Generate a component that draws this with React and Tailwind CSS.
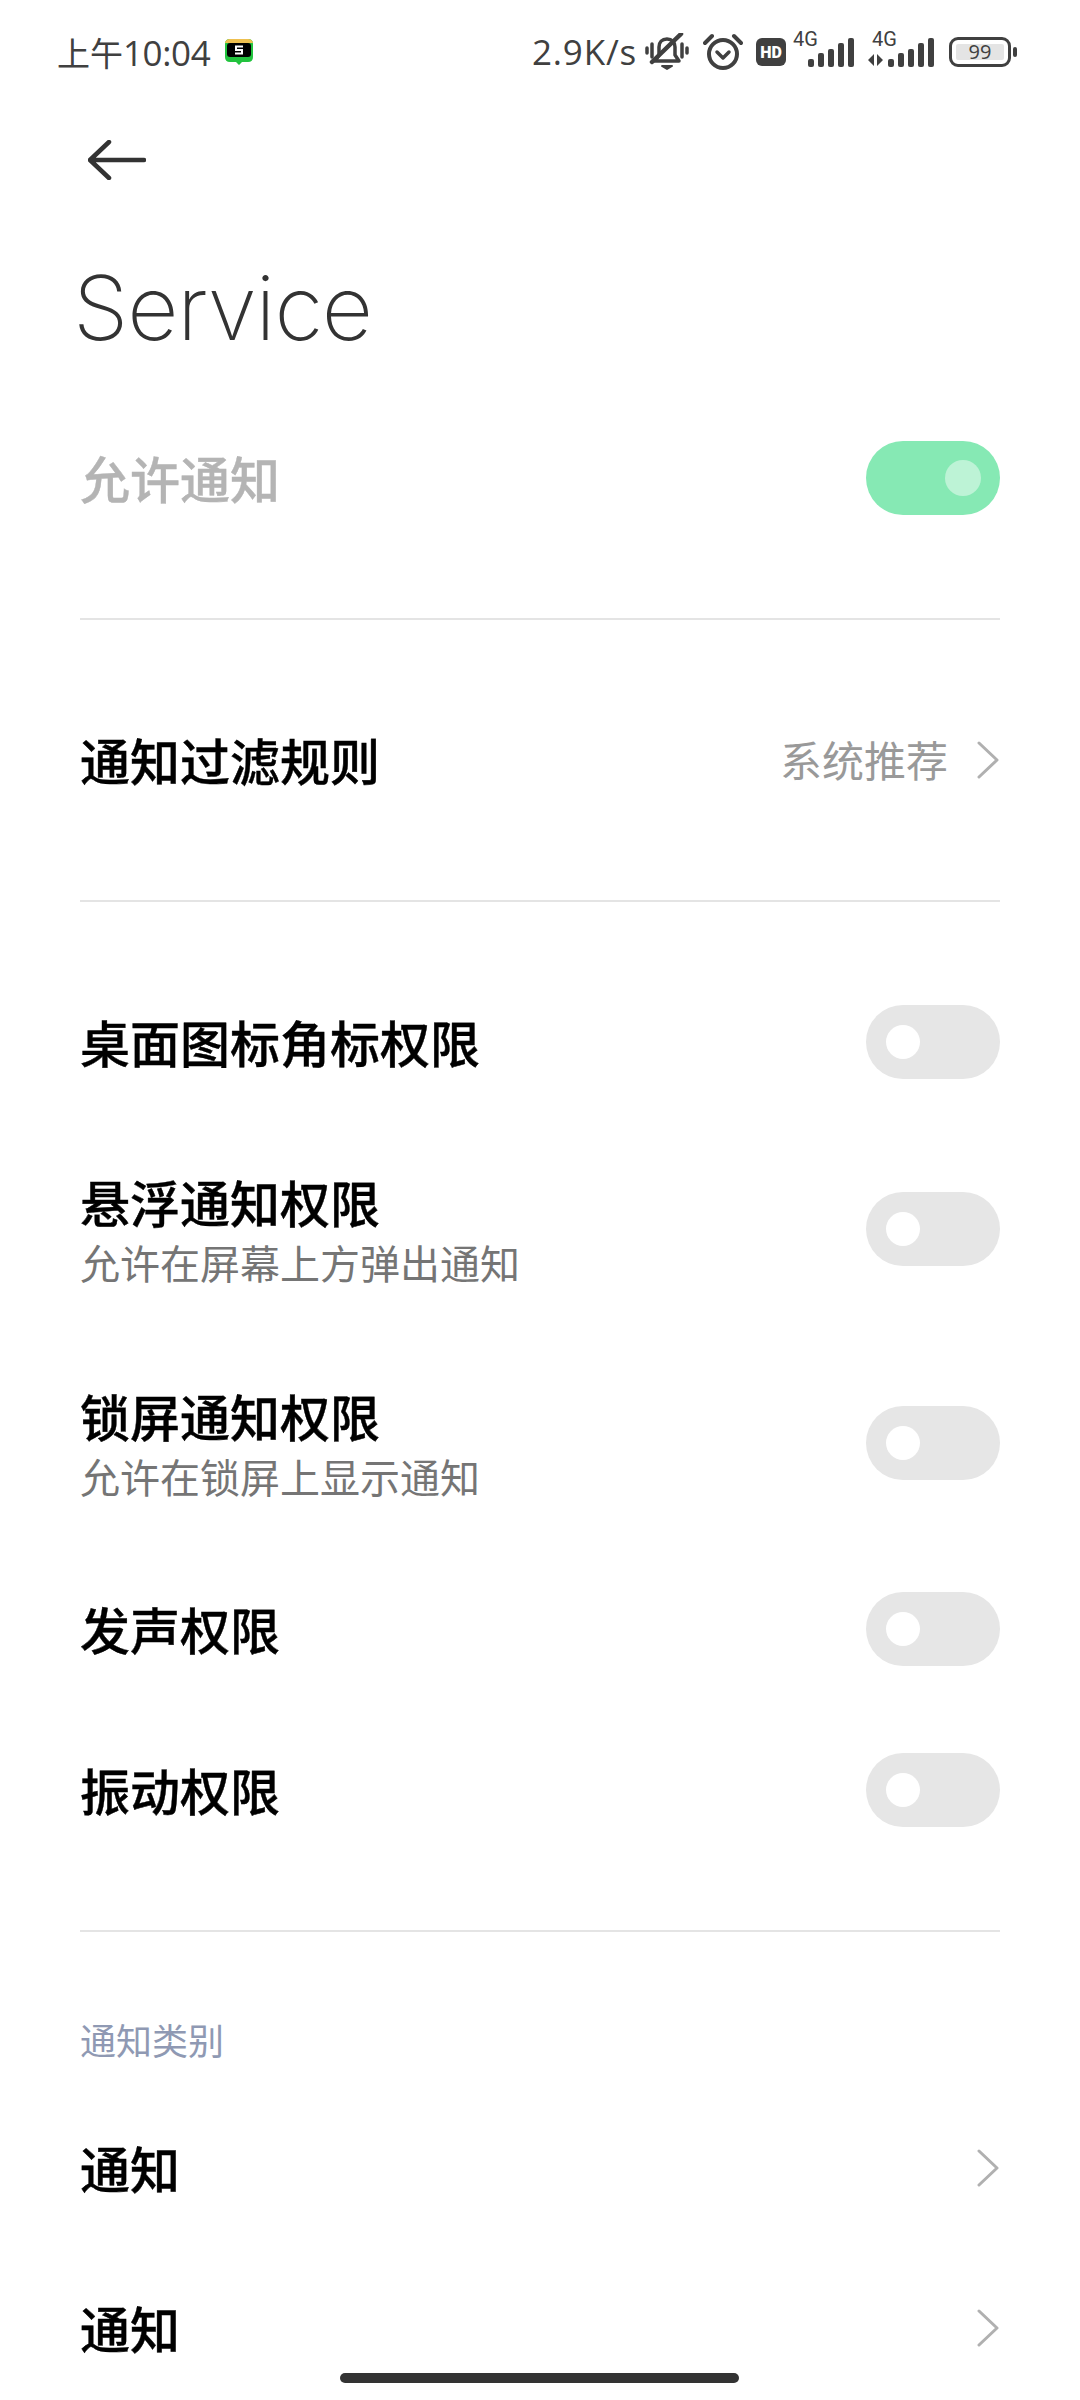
const cjk = 'font-["Noto_Sans_CJK_SC",sans-serif]';

const Toggle = ({ on }) => {
  if (on) {
    return (
      <div className="w-[134px] h-[74px] shrink-0 rounded-full bg-[#86e9b4] flex items-center justify-end pr-[19px]">
        <div className="w-[36px] h-[36px] rounded-full bg-[#bdf3d6]" />
      </div>
    );
  }
  return (
    <div className="w-[134px] h-[74px] shrink-0 rounded-full bg-[#e6e6e6] flex items-center pl-[20px]">
      <div className="w-[34px] h-[34px] rounded-full bg-white" />
    </div>
  );
};

const Chevron = () => (
  <svg width="24" height="38" viewBox="0 0 24 38" className="shrink-0" fill="none">
    <path d="M3 2 L21 19 L3 36" stroke="#b0b0b0" strokeWidth="3" strokeLinecap="round" strokeLinejoin="round" />
  </svg>
);

const Divider = () => <div className="h-[2px] mx-[80px] bg-[#e4e4e4]" />;

const Title = ({ children, color = 'text-black', single = true }) => (
  <div className={`text-[50px] leading-[60px] font-medium [-webkit-text-stroke:0.4px] ${single ? 'mb-[3px]' : ''} ${color}`}>{children}</div>
);

const ToggleRow = ({ title, sub, height }) => (
  <div className={`flex items-center justify-between pl-[80px] pr-[80px] ${height}`}>
    <div>
      <Title single={!sub}>{title}</Title>
      {sub && <div className="text-[40px] leading-[50px] mt-[6px] text-[#757575]">{sub}</div>}
    </div>
    <Toggle />
  </div>
);

const LinkRow = ({ title }) => (
  <div className="h-[160px] flex items-center justify-between pl-[80px] pr-[80px]">
    <Title>{title}</Title>
    <Chevron />
  </div>
);

const Signal = ({ transfer }) => (
  <svg width={transfer ? 67 : 63} height="46" viewBox={transfer ? '0 -6 67 46' : '0 -6 63 46'} className="shrink-0 mb-[6px]">
    <text x={transfer ? 4 : 0} y="14" fontSize="20" fill="#404040" fontFamily="Roboto, sans-serif">4G</text>
    {transfer && <path d="M6 22 V34 L0 28 Z M9 22 V34 L15 28 Z" fill="#404040" />}
    {[0, 1, 2, 3, 4].map((i) => {
      const tops = [27, 21, 17, 11, 6];
      const x = (transfer ? 20 : 15) + i * 10;
      return <rect key={i} x={x} y={tops[i]} width="6" height={35 - tops[i]} rx="2" fill="#404040" />;
    })}
  </svg>
);

const StatusBar = () => (
  <div className="h-[104px] pl-[57px] pr-[63px] flex items-center justify-between text-[#404040]">
    <div className="flex items-center">
      <span className='text-[33px] leading-[44px] font-["Noto_Sans_CJK_SC",sans-serif]'>
        上午<span className='text-[35px] tracking-[-0.4px] font-["Open_Sans",sans-serif]'>10:04</span>
      </span>
      <svg width="28" height="26" viewBox="0 0 28 26" className="ml-[15px] shrink-0">
        <path d="M5 0 H23 Q28 0 28 5 V18 Q28 23 23 23 H17 L14 26 L11 23 H5 Q0 23 0 18 V5 Q0 0 5 0 Z" fill="#22c33e" />
        <path d="M5 0 H23 Q27 0 28 4 H0 Q1 0 5 0 Z" fill="#efc050" />
        <rect x="2" y="4" width="24" height="14" rx="3" fill="#000" />
        <path d="M18 7.5 H11 V11 H17 V14.5 H10" fill="none" stroke="#fff" strokeWidth="2" />
      </svg>
    </div>
    <div className="flex items-center">
      <span className='text-[35px] leading-[44px] tracking-[0.8px] font-["Open_Sans",sans-serif] mr-[8px]'>2.9K/s</span>
      <svg width="44" height="38" viewBox="0 0 44 38" fill="none" stroke="#404040" className="shrink-0 mr-[14px]">
        <path d="M10 28 H34 L30 22 V14 C30 9 27 6 22 6 C17 6 14 9 14 14 V22 Z" strokeWidth="3.5" strokeLinejoin="round" />
        <path d="M36 1 L7 29" strokeWidth="4.5" strokeLinecap="round" stroke="#404040" />
        <path d="M17 33 H27 L22 36 Z" fill="#404040" strokeWidth="2" strokeLinejoin="round" />
        <path d="M2 15 V20 M7 11 V24 M37 11 V24 M42 15 V20" strokeWidth="3.5" strokeLinecap="round" />
      </svg>
      <svg width="40" height="38" viewBox="0 0 40 38" fill="none" stroke="#404040" className="shrink-0 mr-[13px]">
        <circle cx="20" cy="21" r="14" strokeWidth="4" />
        <path d="M14 19 L20 25 L26 19" strokeWidth="3.5" strokeLinecap="round" strokeLinejoin="round" />
        <path d="M2 10 L9 3 M38 10 L31 3" strokeWidth="4" strokeLinecap="round" />
      </svg>
      <svg width="30" height="28" viewBox="0 0 30 28" className="shrink-0 mr-[7px]">
        <rect width="30" height="28" rx="6" fill="#404040" />
        <text x="15" y="19.5" textAnchor="middle" fontSize="16" fontWeight="900" fill="#fff" fontFamily="Roboto, sans-serif">HD</text>
      </svg>
      <Signal />
      <div className="w-[12px]" />
      <Signal transfer />
      <div className="ml-[14px] flex items-center">
        <div className="w-[62px] h-[30px] rounded-[9px] border-[3px] border-[#404040] p-[4px]">
          <div className='h-full rounded-[2px] bg-[#e4e4e4] flex items-center justify-center text-[20px] leading-none font-["Open_Sans",sans-serif]'>99</div>
        </div>
        <div className="w-[4px] h-[10px] rounded-full bg-[#404040] ml-[2px]" />
      </div>
    </div>
  </div>
);

export default function App() {
  return (
    <div className={`relative w-[1080px] h-[2400px] overflow-hidden bg-white ${cjk}`}>
      <StatusBar />

      <div className="h-[112px] pl-[88px] flex items-center">
        <svg width="58" height="40" viewBox="0 0 58 40" fill="none">
          <path d="M56 20 H2 M21 2 L2 20 L21 38" stroke="#333" strokeWidth="4.5" strokeLinecap="round" strokeLinejoin="round" />
        </svg>
      </div>

      <div className="h-[184px] pl-[73px] pb-[2px] flex items-center">
        <h1 className='text-[89px] leading-none font-[250] tracking-[-1.2px] text-[#333] font-["Inter",sans-serif]'>Service</h1>
      </div>

      <div className="h-[140px] mt-[8px] flex items-center justify-between px-[80px]">
        <Title color="text-[#b4b4b4]">允许通知</Title>
        <Toggle on />
      </div>
      <div className="h-[70px]" />
      <Divider />

      <div className="h-[140px] mt-[70px] flex items-center justify-between px-[80px]">
        <Title>通知过滤规则</Title>
        <div className="flex items-center">
          <span className="text-[42px] leading-[50px] text-[#999] mr-[28px] mb-[3px]">系统推荐</span>
          <Chevron />
        </div>
      </div>
      <div className="h-[70px]" />
      <Divider />

      <div className="h-[60px]" />
      <ToggleRow title="桌面图标角标权限" height="h-[160px]" />
      <ToggleRow title="悬浮通知权限" sub="允许在屏幕上方弹出通知" height="h-[213px]" />
      <ToggleRow title="锁屏通知权限" sub="允许在锁屏上显示通知" height="h-[215px]" />
      <ToggleRow title="发声权限" height="h-[158px]" />
      <ToggleRow title="振动权限" height="h-[164px]" />
      <div className="h-[58px]" />
      <Divider />

      <div className="h-[156px] pl-[80px] pt-[58px] flex items-center text-[36px] text-[#8f99b3]">通知类别</div>
      <LinkRow title="通知" />
      <LinkRow title="通知" />

      <div className="absolute left-[340px] bottom-[17px] w-[399px] h-[10px] rounded-full bg-[#333]" />
    </div>
  );
}
